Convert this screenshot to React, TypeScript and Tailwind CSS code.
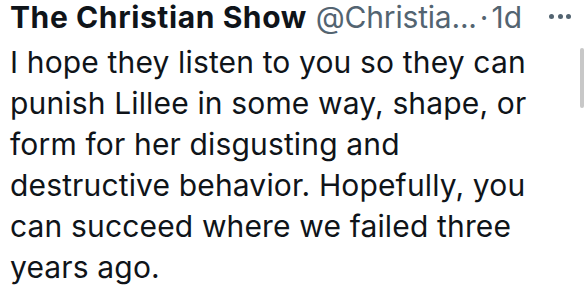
import * as React from "react";

export default function App() {
  return (
    <div className="relative w-[585px] h-[302px] bg-white overflow-hidden" style={{ fontFamily: "Inter, 'Noto Sans', sans-serif" }}>
      <div className="pl-[10px] pr-[12px]">
        <div className="-mt-[2px] flex items-center h-[38px] text-[30px] leading-[38px] whitespace-nowrap">
          <span className="font-bold text-[#0f1419] tracking-[0.6px]">The Christian Show</span>
          <span className="ml-[9px] text-[#536471] tracking-[-0.2px]">@Christia...</span>
          <span className="text-[#536471] mx-[3px]">·</span>
          <span className="text-[#536471]">1d</span>
          <div className="ml-auto flex gap-[3.5px] pr-[2px] -mt-[2px]">
            <span className="w-[5px] h-[5px] rounded-full bg-[#536471]" />
            <span className="w-[5px] h-[5px] rounded-full bg-[#536471]" />
            <span className="w-[5px] h-[5px] rounded-full bg-[#536471]" />
          </div>
        </div>
        <p className="mt-[6px] text-[30px] leading-[41px] tracking-[0.15px] text-[#0f1419] w-[532px]">
          I hope they listen to you so they can punish Lillee in some way, shape, or form for her disgusting and destructive behavior. Hopefully, you can succeed where we failed three years ago.
        </p>
      </div>
      <div className="absolute right-[1px] top-[48px] w-[4px] h-[60px] rounded-full bg-[#c8c8c8]" />
    </div>
  );
}
